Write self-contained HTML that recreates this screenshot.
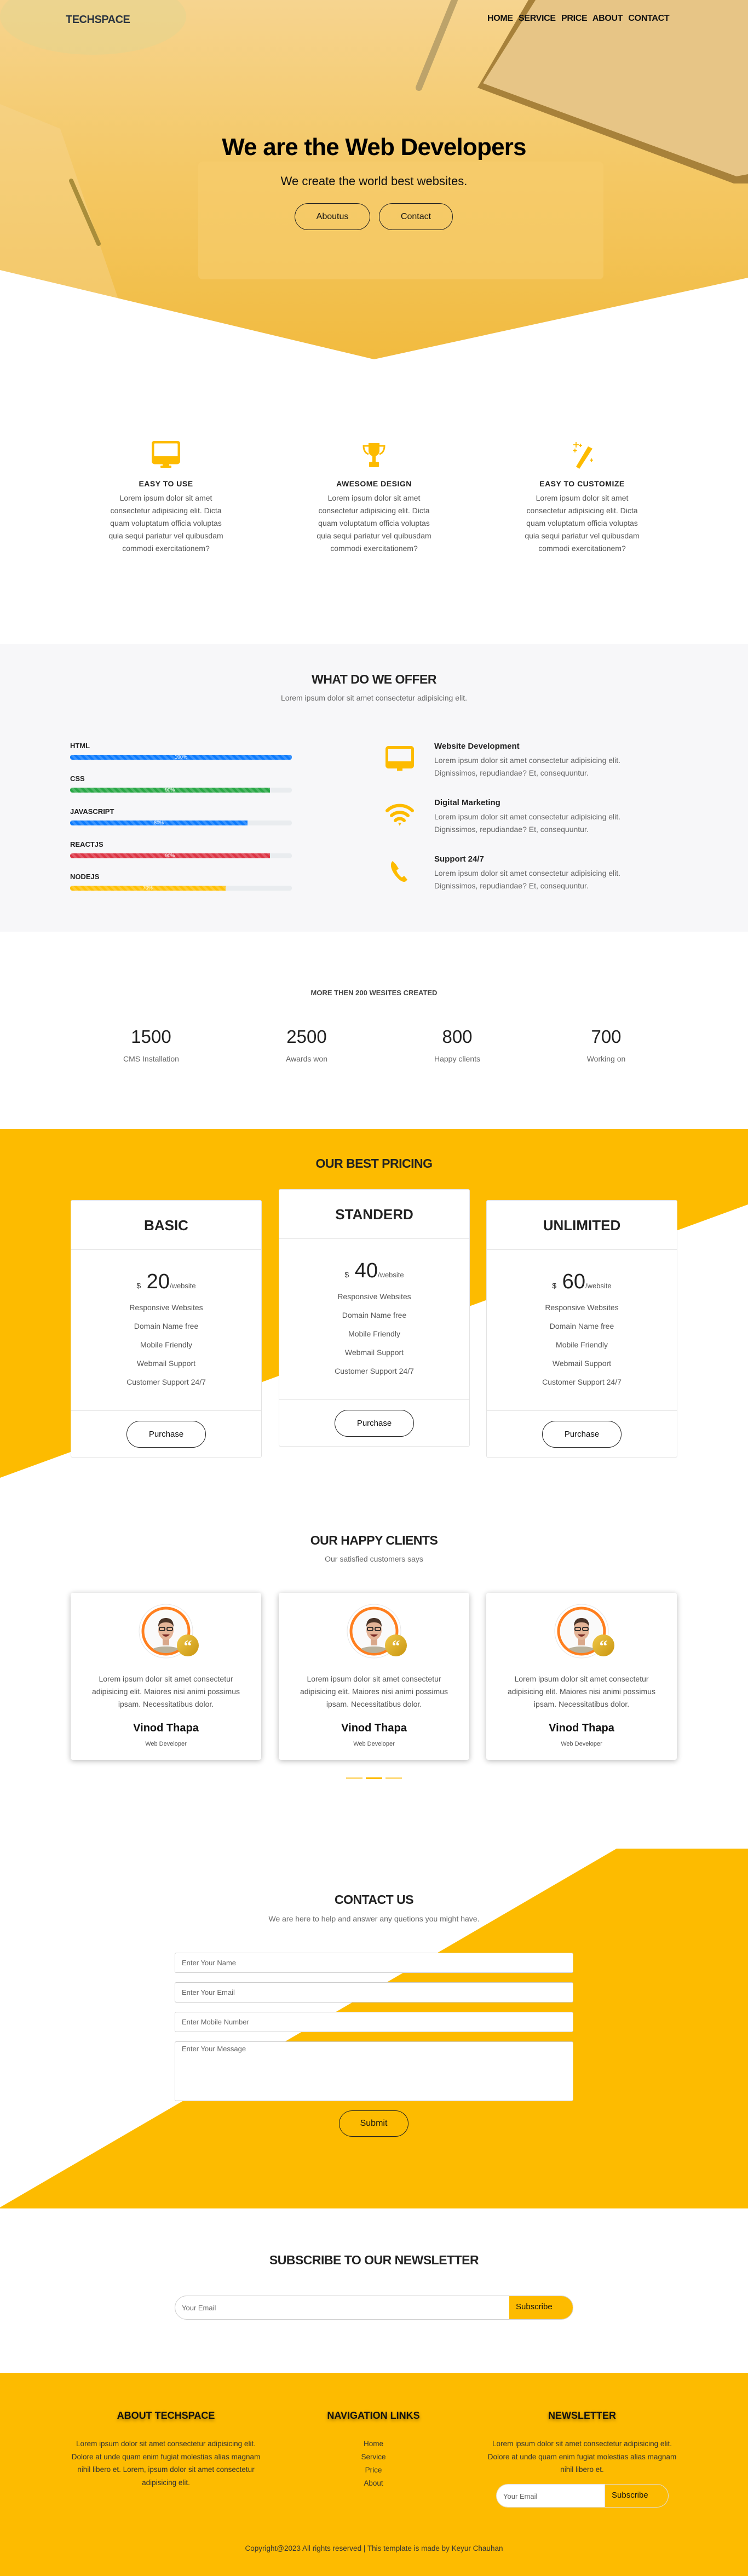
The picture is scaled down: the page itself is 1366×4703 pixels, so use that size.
<!DOCTYPE html>
<html><head><meta charset="utf-8">
<style>
*{margin:0;padding:0;box-sizing:border-box}
body{width:1366px;height:4703px;position:relative;font-family:"Liberation Sans",sans-serif;color:#222;background:#fff;overflow:hidden}
.a{position:absolute}
.c{text-align:center}
.h2{font-weight:bold;font-size:23px;color:#222;letter-spacing:-0.5px}
.p{color:#666;font-size:14px}
.feat{width:300px;text-align:center}
.feat h4{font-size:14px;font-weight:bold;letter-spacing:0.5px;margin-top:0}
.feat p{font-size:14px;line-height:23px;color:#555;margin-top:7px;padding:0 36px}
.bar{position:absolute;left:128px;width:405px;height:9px;background:#e9ecef;border-radius:4px;overflow:hidden}
.bar div{height:100%;border-radius:4px 0 0 4px;background-image:linear-gradient(45deg,rgba(255,255,255,.18) 25%,transparent 25%,transparent 50%,rgba(255,255,255,.18) 50%,rgba(255,255,255,.18) 75%,transparent 75%);background-size:12px 12px;color:#fff;font-size:9px;line-height:9px;text-align:center}
.lbl{position:absolute;left:128px;font-size:13px;font-weight:bold;color:#222}
.svc h4{font-size:15px;font-weight:bold;color:#222}
.svc p{font-size:14px;color:#666;line-height:23px;margin-top:6px}
.card{position:absolute;width:349px;background:#fff;border:1px solid #e3e3e3;border-radius:3px}
.card .hd{height:90px;border-bottom:1px solid #e3e3e3;text-align:center;font-size:26px;font-weight:bold;line-height:90px;color:#222}
.card .bd{height:293px;text-align:center;padding-top:36px}
.card .pr{font-size:38px;color:#222;line-height:44px}
.card .pr small{font-size:13px;color:#555}
.card .pr sub{font-size:14px;vertical-align:baseline}
.card .bd div.f{font-size:14px;color:#555;line-height:34px}
.card .ft{border-top:1px solid #e3e3e3;height:85px;position:relative}
.btn{position:absolute;border:1px solid #222;border-radius:25px;text-align:center;font-size:15px;color:#111;background:transparent}
.cl{position:absolute;top:2908px;width:348px;height:305px;background:#fff;border-radius:4px;box-shadow:0 2px 10px rgba(0,0,0,.28);text-align:center}
.cl p{position:absolute;top:146px;left:0;width:100%;font-size:14px;line-height:23px;color:#555;padding:0 22px}
.cl h5{position:absolute;top:236px;width:100%;font-size:20px;font-weight:bold;color:#111}
.cl small{position:absolute;top:270px;left:0;width:100%;font-size:11px;color:#555}
.inp{position:absolute;left:319px;width:728px;background:#fff;border:1px solid #ccc;border-radius:3px;font-size:13px;color:#666;padding-left:12px}
.fh{position:absolute;top:4400px;width:360px;text-align:center;font-size:18px;font-weight:bold;color:#111;text-shadow:0 3px 6px rgba(0,0,0,.35)}
.ft2{position:absolute;width:360px;text-align:center;font-size:13.5px;line-height:23.5px;color:#333}
</style></head><body>

<!-- HERO -->
<div class="a" style="left:0;top:0;width:1366px;height:700px;background:linear-gradient(180deg,#f6d48f 0%,#f4c865 45%,#f1b93a 100%);overflow:hidden">
 <svg class="a" style="left:0;top:0" width="1366" height="700">
  <ellipse cx="170" cy="30" rx="170" ry="70" fill="#e0d490" opacity=".45"/>
  <polygon points="0,190 110,235 330,880 0,880" fill="#f7d591" opacity=".45"/>
  <line x1="130" y1="330" x2="180" y2="445" stroke="#a98d3a" stroke-width="8" stroke-linecap="round"/>
  <polygon points="965,0 1366,0 1366,335 1340,335 872,160" fill="#a7813a"/>
  <polygon points="978,0 1366,0 1366,318 1345,322 882,152" fill="#e7c586"/>
  <line x1="830" y1="0" x2="765" y2="160" stroke="#bda36a" stroke-width="12" stroke-linecap="round"/>
  <rect x="362" y="295" width="740" height="215" rx="8" fill="#f6cd6e" opacity=".6"/>
 </svg>
 <svg class="a" style="left:0;top:0" width="1366" height="700"><polygon points="0,493 683,656 1366,507 1366,700 0,700" fill="#fff"/></svg>
</div>
<div class="a" style="left:120px;top:25px;font-size:20px;font-weight:bold;color:#2b3440;letter-spacing:-0.5px">TECHSPACE</div>
<div class="a" style="left:890px;top:25px;font-size:16px;font-weight:bold;color:#111;word-spacing:6px;letter-spacing:-0.3px">HOME SERVICE PRICE ABOUT CONTACT</div>
<div class="a c" style="left:0;width:1366px;top:244px;font-size:44px;font-weight:bold;color:#000;letter-spacing:-0.8px">We are the Web Developers</div>
<div class="a c" style="left:0;width:1366px;top:318px;font-size:22px;color:#111">We create the world best websites.</div>
<div class="btn" style="left:538px;top:371px;width:138px;height:49px;line-height:47px;font-size:16px">Aboutus</div>
<div class="btn" style="left:692px;top:371px;width:135px;height:49px;line-height:47px;font-size:16px">Contact</div>

<!-- FEATURES -->
<svg class="a" style="left:277px;top:805px" width="52" height="50"><rect x="2" y="2" width="48" height="38" rx="4" fill="none" stroke="#fdbb00" stroke-width="5"/><rect x="2" y="28" width="48" height="12" fill="#fdbb00"/><rect x="20" y="40" width="12" height="8" fill="#fdbb00"/><rect x="16" y="45" width="20" height="4" rx="1" fill="#fdbb00"/></svg>
<svg class="a" style="left:660px;top:808px" width="46" height="46"><path d="M13 1h20v14a10 10 0 0 1-20 0z" fill="#fdbb00"/><path d="M13 6H4c0 10 5 14 9 15M33 6h9c0 10-5 14-9 15" fill="none" stroke="#fdbb00" stroke-width="3"/><rect x="20" y="24" width="6" height="12" fill="#fdbb00"/><rect x="14" y="35" width="18" height="10" rx="2" fill="#fdbb00"/></svg>
<svg class="a" style="left:1040px;top:805px" width="46" height="52"><path d="M34 10l8 4-24 37-6-4z" fill="#fdbb00"/><path d="M12 2v10M7 7h10M20 5v6M17 8h6M10 14v7M6.5 17.5h7M40 32v6M37 35h6" stroke="#fdbb00" stroke-width="1.8"/></svg>

<div class="a feat" style="left:153px;top:875px"><h4>EASY TO USE</h4><p>Lorem ipsum dolor sit amet consectetur adipisicing elit. Dicta quam voluptatum officia voluptas quia sequi pariatur vel quibusdam commodi exercitationem?</p></div>
<div class="a feat" style="left:533px;top:875px"><h4>AWESOME DESIGN</h4><p>Lorem ipsum dolor sit amet consectetur adipisicing elit. Dicta quam voluptatum officia voluptas quia sequi pariatur vel quibusdam commodi exercitationem?</p></div>
<div class="a feat" style="left:913px;top:875px"><h4>EASY TO CUSTOMIZE</h4><p>Lorem ipsum dolor sit amet consectetur adipisicing elit. Dicta quam voluptatum officia voluptas quia sequi pariatur vel quibusdam commodi exercitationem?</p></div>

<!-- OFFER -->
<div class="a" style="left:0;top:1176px;width:1366px;height:525px;background:#f7f7f9"></div>
<div class="a c h2" style="left:0;width:1366px;top:1227px">WHAT DO WE OFFER</div>
<div class="a c p" style="left:0;width:1366px;top:1266px">Lorem ipsum dolor sit amet consectetur adipisicing elit.</div>

<div class="lbl" style="top:1354px">HTML</div><div class="bar" style="top:1378px"><div style="width:100%;background-color:#0d7bfd">100%</div></div>
<div class="lbl" style="top:1414px">CSS</div><div class="bar" style="top:1438px"><div style="width:90%;background-color:#28a745">90%</div></div>
<div class="lbl" style="top:1474px">JAVASCRIPT</div><div class="bar" style="top:1498px"><div style="width:80%;background-color:#0d7bfd">80%</div></div>
<div class="lbl" style="top:1534px">REACTJS</div><div class="bar" style="top:1558px"><div style="width:90%;background-color:#dc3545">90%</div></div>
<div class="lbl" style="top:1593px">NODEJS</div><div class="bar" style="top:1617px"><div style="width:70%;background-color:#ffc107">70%</div></div>

<svg class="a" style="left:704px;top:1362px" width="54" height="48"><rect x="2.5" y="2.5" width="47" height="36" rx="3" fill="none" stroke="#fdbb00" stroke-width="5"/><rect x="2" y="28" width="48" height="11" fill="#fdbb00"/><rect x="21" y="38" width="10" height="7" fill="#fdbb00"/></svg>
<svg class="a" style="left:704px;top:1465px" width="54" height="44"><path d="M3 15a33 33 0 0 1 46 0" fill="none" stroke="#fdbb00" stroke-width="6" stroke-linecap="round"/><path d="M11 24a22 22 0 0 1 30 0" fill="none" stroke="#fdbb00" stroke-width="6" stroke-linecap="round"/><path d="M18 33a11 11 0 0 1 16 0" fill="none" stroke="#fdbb00" stroke-width="6" stroke-linecap="round"/><path d="M23 37h6l-3 6z" fill="#fdbb00"/></svg>
<svg class="a" style="left:710px;top:1568px" width="40" height="44"><path d="M7 4c-5 4-4 14 4 25s16 15 20 12l3-3-6-7-4 3c-4-2-9-9-10-13l4-3-5-8z" fill="#fdbb00"/></svg>

<div class="a svc" style="left:793px;top:1354px"><h4>Website Development</h4><p>Lorem ipsum dolor sit amet consectetur adipisicing elit.<br>Dignissimos, repudiandae? Et, consequuntur.</p></div>
<div class="a svc" style="left:793px;top:1457px"><h4>Digital Marketing</h4><p>Lorem ipsum dolor sit amet consectetur adipisicing elit.<br>Dignissimos, repudiandae? Et, consequuntur.</p></div>
<div class="a svc" style="left:793px;top:1560px"><h4>Support 24/7</h4><p>Lorem ipsum dolor sit amet consectetur adipisicing elit.<br>Dignissimos, repudiandae? Et, consequuntur.</p></div>

<!-- STATS -->
<div class="a c" style="left:0;width:1366px;top:1805px;font-size:13px;font-weight:bold;color:#444">MORE THEN 200 WESITES CREATED</div>
<div class="a c" style="left:176px;width:200px;top:1874px;font-size:33px;color:#222">1500</div>
<div class="a c" style="left:460px;width:200px;top:1874px;font-size:33px;color:#222">2500</div>
<div class="a c" style="left:735px;width:200px;top:1874px;font-size:33px;color:#222">800</div>
<div class="a c" style="left:1007px;width:200px;top:1874px;font-size:33px;color:#222">700</div>
<div class="a c p" style="left:176px;width:200px;top:1925px">CMS Installation</div>
<div class="a c p" style="left:460px;width:200px;top:1925px">Awards won</div>
<div class="a c p" style="left:735px;width:200px;top:1925px">Happy clients</div>
<div class="a c p" style="left:1007px;width:200px;top:1925px">Working on</div>

<!-- PRICING -->
<svg class="a" style="left:0;top:2061px" width="1366" height="640"><polygon points="0,0 1366,0 1366,138 0,637" fill="#fdbb00"/></svg>
<div class="a c h2" style="left:0;width:1366px;top:2111px">OUR BEST PRICING</div>

<div class="card" style="left:129px;top:2191px"><div class="hd">BASIC</div><div class="bd"><div class="pr"><sub>$</sub> 20<small>/website</small></div><div class="f">Responsive Websites</div><div class="f">Domain Name free</div><div class="f">Mobile Friendly</div><div class="f">Webmail Support</div><div class="f">Customer Support 24/7</div></div><div class="ft"><div class="btn" style="left:101px;top:18px;width:145px;height:49px;line-height:47px">Purchase</div></div></div>
<div class="card" style="left:509px;top:2171px"><div class="hd">STANDERD</div><div class="bd"><div class="pr"><sub>$</sub> 40<small>/website</small></div><div class="f">Responsive Websites</div><div class="f">Domain Name free</div><div class="f">Mobile Friendly</div><div class="f">Webmail Support</div><div class="f">Customer Support 24/7</div></div><div class="ft"><div class="btn" style="left:101px;top:18px;width:145px;height:49px;line-height:47px">Purchase</div></div></div>
<div class="card" style="left:888px;top:2191px"><div class="hd">UNLIMITED</div><div class="bd"><div class="pr"><sub>$</sub> 60<small>/website</small></div><div class="f">Responsive Websites</div><div class="f">Domain Name free</div><div class="f">Mobile Friendly</div><div class="f">Webmail Support</div><div class="f">Customer Support 24/7</div></div><div class="ft"><div class="btn" style="left:101px;top:18px;width:145px;height:49px;line-height:47px">Purchase</div></div></div>

<!-- CLIENTS -->
<div class="a c h2" style="left:0;width:1366px;top:2799px">OUR HAPPY CLIENTS</div>
<div class="a c p" style="left:0;width:1366px;top:2838px">Our satisfied customers says</div>

<svg width="0" height="0" style="position:absolute"><defs>
<linearGradient id="gold" x1="0" y1="0" x2="1" y2="1"><stop offset="0" stop-color="#f0c84a"/><stop offset="1" stop-color="#c9950e"/></linearGradient>
<clipPath id="av"><circle cx="50" cy="50" r="40"/></clipPath>
<g id="avatar">
 <circle cx="50" cy="50" r="49" fill="#fff" stroke="#e6e6e6"/>
 <circle cx="50" cy="50" r="42" fill="#fafafa" stroke="#ff7f1f" stroke-width="5"/>
 <g clip-path="url(#av)">
  <path d="M14 100c2-18 18-22 36-22s34 4 36 22z" fill="#b8b09a"/>
  <rect x="44" y="62" width="12" height="14" fill="#d9a88a"/>
  <ellipse cx="50" cy="48" rx="14" ry="18" fill="#e4b497"/>
  <path d="M36 42c0-12 6-16 14-16s14 4 14 16c-3-6-6-8-14-8s-11 2-14 8z" fill="#4a3428"/>
  <rect x="38" y="43" width="10" height="6" rx="2" fill="none" stroke="#222" stroke-width="1.8"/>
  <rect x="52" y="43" width="10" height="6" rx="2" fill="none" stroke="#222" stroke-width="1.8"/>
  <path d="M43 56q7 8 14 0z" fill="#7a2a24"/>
 </g>
 <circle cx="90" cy="76" r="20" fill="url(#gold)"/>
 <text x="90" y="87" font-family="Liberation Serif" font-weight="bold" font-size="30" fill="#fff" text-anchor="middle">“</text>
</g></defs></svg>

<div class="cl" style="left:129px"><svg class="a" style="left:124px;top:20px" width="112" height="102"><use href="#avatar"/></svg><p>Lorem ipsum dolor sit amet consectetur adipisicing elit. Maiores nisi animi possimus ipsam. Necessitatibus dolor.</p><h5>Vinod Thapa</h5><small>Web Developer</small></div>
<div class="cl" style="left:509px"><svg class="a" style="left:124px;top:20px" width="112" height="102"><use href="#avatar"/></svg><p>Lorem ipsum dolor sit amet consectetur adipisicing elit. Maiores nisi animi possimus ipsam. Necessitatibus dolor.</p><h5>Vinod Thapa</h5><small>Web Developer</small></div>
<div class="cl" style="left:888px"><svg class="a" style="left:124px;top:20px" width="112" height="102"><use href="#avatar"/></svg><p>Lorem ipsum dolor sit amet consectetur adipisicing elit. Maiores nisi animi possimus ipsam. Necessitatibus dolor.</p><h5>Vinod Thapa</h5><small>Web Developer</small></div>
<div class="a" style="left:632px;top:3245px;width:30px;height:3px;background:#fdd97a"></div>
<div class="a" style="left:668px;top:3245px;width:30px;height:3px;background:#fdbb00"></div>
<div class="a" style="left:704px;top:3245px;width:30px;height:3px;background:#fdd97a"></div>

<!-- CONTACT -->
<svg class="a" style="left:0;top:3375px" width="1366" height="658"><polygon points="1126,0 1366,0 1366,657 0,657 0,655" fill="#fdbb00"/></svg>
<div class="a c h2" style="left:0;width:1366px;top:3455px">CONTACT US</div>
<div class="a c p" style="left:0;width:1366px;top:3495px">We are here to help and answer any quetions you might have.</div>
<div class="inp" style="top:3565px;height:37px;line-height:35px">Enter Your Name</div>
<div class="inp" style="top:3619px;height:37px;line-height:35px">Enter Your Email</div>
<div class="inp" style="top:3673px;height:37px;line-height:35px">Enter Mobile Number</div>
<div class="inp" style="top:3727px;height:109px;padding-top:5px">Enter Your Message</div>
<div class="btn" style="left:619px;top:3853px;width:127px;height:48px;line-height:46px;font-size:16px">Submit</div>

<!-- NEWSLETTER -->
<div class="a c h2" style="left:0;width:1366px;top:4113px">SUBSCRIBE TO OUR NEWSLETTER</div>
<div class="a" style="left:319px;top:4191px;width:728px;height:44px;border:1px solid #ccc;border-radius:22px;overflow:hidden;background:#fff">
 <div class="a" style="left:12px;top:14px;font-size:13px;color:#666">Your Email</div>
 <div class="a" style="left:610px;top:0;width:118px;height:44px;background:#fdbb00;font-size:15px;line-height:40px;padding-left:12px;color:#111">Subscribe</div>
</div>

<!-- FOOTER -->
<div class="a" style="left:0;top:4332px;width:1366px;height:371px;background:#fdbb00"></div>
<div class="fh" style="left:123px">ABOUT TECHSPACE</div>
<div class="fh" style="left:502px">NAVIGATION LINKS</div>
<div class="fh" style="left:883px">NEWSLETTER</div>
<div class="ft2" style="left:123px;top:4450px">Lorem ipsum dolor sit amet consectetur adipisicing elit. Dolore at unde quam enim fugiat molestias alias magnam nihil libero et. Lorem, ipsum dolor sit amet consectetur adipisicing elit.</div>
<div class="ft2" style="left:502px;top:4450px;line-height:24px">Home<br>Service<br>Price<br>About</div>
<div class="ft2" style="left:883px;top:4450px">Lorem ipsum dolor sit amet consectetur adipisicing elit. Dolore at unde quam enim fugiat molestias alias magnam nihil libero et.</div>
<div class="a" style="left:906px;top:4535px;width:315px;height:43px;border:1px solid #ddd;border-radius:22px;overflow:hidden;background:#fdbb00">
 <div class="a" style="left:0;top:0;width:198px;height:43px;background:#fff;border-right:1px solid #ddd"></div>
 <div class="a" style="left:12px;top:14px;font-size:13px;color:#666">Your Email</div>
 <div class="a" style="left:210px;top:11px;font-size:15px;color:#111">Subscribe</div>
</div>
<div class="a c" style="left:0;width:1366px;top:4645px;font-size:13.5px;color:#333">Copyright@2023 All rights reserved | This template is made by Keyur Chauhan</div>

</body></html>
